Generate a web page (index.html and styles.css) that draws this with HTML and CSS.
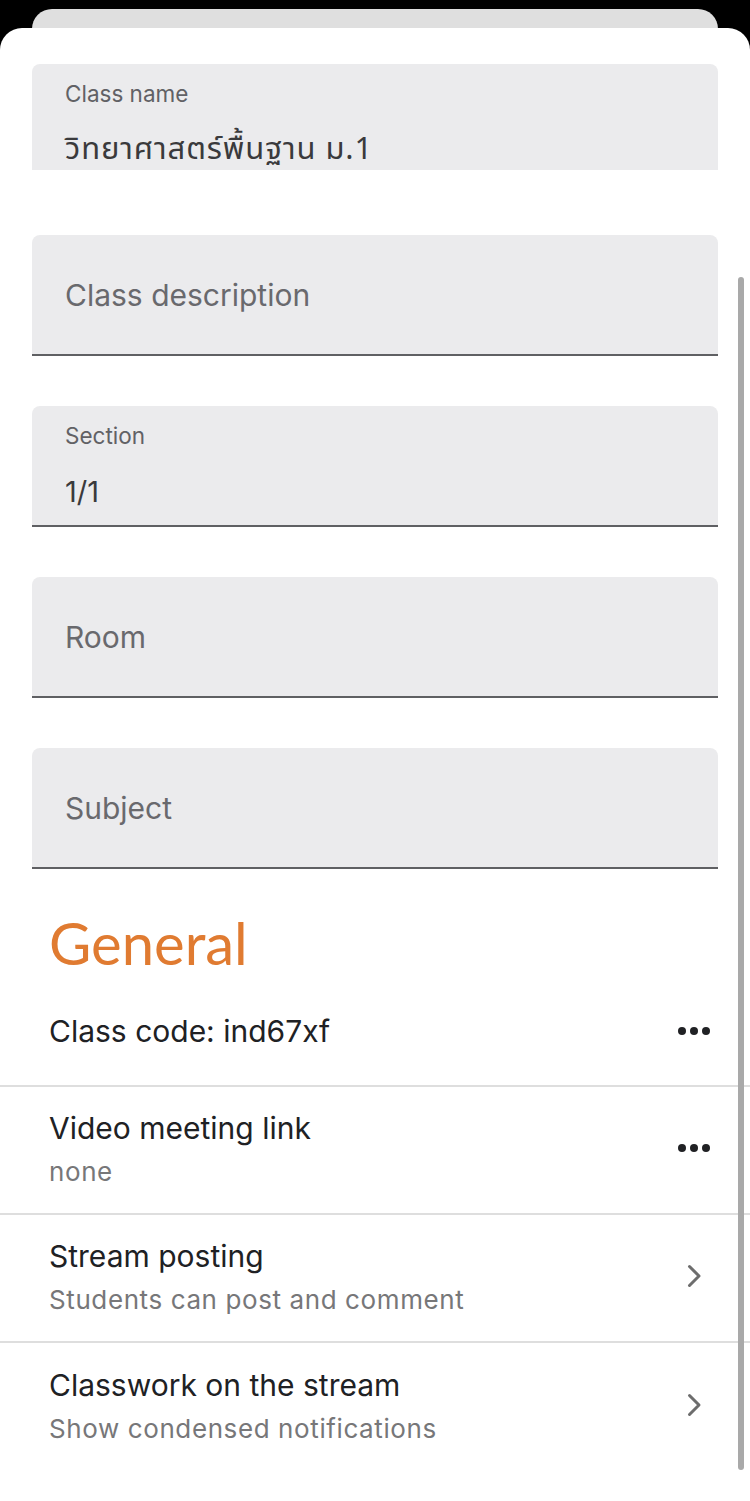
FILE: index.html
```html
<!DOCTYPE html>
<html lang="en">
<head>
<meta charset="utf-8">
<title>Class settings</title>
<link rel="stylesheet" href="styles.css">
</head>
<body>
<div class="screen">
  <div class="back-card"></div>
  <div class="sheet">
    <div class="fields">
      <div class="field field-name">
        <div class="field-label">Class name</div>
        <div class="field-value thai">วิทยาศาสตร์พื้นฐาน ม.1</div>
      </div>
      <div class="field field-empty">
        <div class="field-placeholder">Class description</div>
      </div>
      <div class="field">
        <div class="field-label">Section</div>
        <div class="field-value">1/1</div>
      </div>
      <div class="field field-empty">
        <div class="field-placeholder">Room</div>
      </div>
      <div class="field field-empty">
        <div class="field-placeholder">Subject</div>
      </div>
    </div>

    <h2 class="section-title">General</h2>

    <div class="row row-single">
      <div class="row-text">
        <div class="row-title">Class code: ind67xf</div>
      </div>
      <span class="dots"><i></i><i></i><i></i></span>
    </div>
    <div class="row">
      <div class="row-text">
        <div class="row-title">Video meeting link</div>
        <div class="row-sub">none</div>
      </div>
      <span class="dots"><i></i><i></i><i></i></span>
    </div>
    <div class="row">
      <div class="row-text">
        <div class="row-title">Stream posting</div>
        <div class="row-sub">Students can post and comment</div>
      </div>
      <svg class="chev" width="16" height="24" viewBox="0 0 16 24"><path d="M2.5 2.5 L12 12 L2.5 21.5" fill="none" stroke="#6d6d6d" stroke-width="3" stroke-linecap="round" stroke-linejoin="round"/></svg>
    </div>
    <div class="row row-last">
      <div class="row-text">
        <div class="row-title">Classwork on the stream</div>
        <div class="row-sub">Show condensed notifications</div>
      </div>
      <svg class="chev" width="16" height="24" viewBox="0 0 16 24"><path d="M2.5 2.5 L12 12 L2.5 21.5" fill="none" stroke="#6d6d6d" stroke-width="3" stroke-linecap="round" stroke-linejoin="round"/></svg>
    </div>
    <div class="scrollbar"></div>
  </div>
</div>
</body>
</html>
```

FILE: styles.css
```css
html, body {
  margin: 0;
  padding: 0;
  background: #000;
}
body {
  font-family: Inter, Roboto, "Noto Sans", sans-serif;
  width: 750px;
  height: 1501px;
  overflow: hidden;
}
.screen {
  padding-top: 9px;
}
.back-card {
  margin: 0 32px;
  height: 40px;
  background: #dfdfdf;
  border-radius: 20px 20px 0 0;
}
.sheet {
  position: relative;
  margin-top: -21px;
  background: #fff;
  border-radius: 22px 22px 0 0;
  height: 1473px;
  padding: 36px 0 0;
  box-sizing: border-box;
}
.fields {
  display: flex;
  flex-direction: column;
  gap: 50px;
  padding: 0 32px;
}
.field {
  height: 121px;
  box-sizing: border-box;
  background: #ebebed;
  border-radius: 8px 8px 0 0;
  border-bottom: 2px solid #5f6063;
  padding: 0 33px;
  display: flex;
  flex-direction: column;
}
.field-name {
  height: 106px;
  border-bottom: none;
  margin-bottom: 15px;
  overflow: hidden;
}
.field-empty {
  justify-content: center;
}
.field-label {
  font-size: 22.5px;
  line-height: 28px;
  color: #616165;
  margin-top: 16px;
}
.field-value {
  font-size: 29px;
  line-height: 40px;
  color: #3a3a3c;
  margin-top: 22px;
}
.field-value.thai {
  font-family: "Noto Sans Thai", "Noto Sans", Roboto, sans-serif;
  font-size: 31px;
  letter-spacing: 0.9px;
  line-height: 38px;
  margin-top: 23px;
}
.field-placeholder {
  font-size: 30px;
  line-height: 40px;
  color: #69696d;
}
.section-title {
  margin: 42px 0 0 49px;
  font-family: Lato, "Open Sans", sans-serif;
  font-weight: 400;
  font-size: 58px;
  line-height: 64px;
  color: #e07b31;
}
.row {
  display: flex;
  align-items: center;
  justify-content: space-between;
  padding: 23px 40px 27px 49px;
  border-bottom: 2px solid #dedede;
  height: 128px;
  box-sizing: border-box;
}
.row-single {
  height: 112px;
  padding-top: 38px;
  padding-bottom: 36px;
}
.row-last {
  border-bottom: none;
}
.row-title {
  font-size: 30px;
  line-height: 38px;
  color: #202124;
}
.row-sub {
  font-size: 26px;
  line-height: 30px;
  color: #777779;
  letter-spacing: 0.6px;
  margin-top: 10px;
}
.dots {
  display: flex;
  gap: 4px;
}
.dots i {
  display: block;
  width: 8px;
  height: 8px;
  border-radius: 50%;
  background: #202124;
}
.chev {
  margin-right: 7px;
  display: block;
}
.scrollbar {
  position: absolute;
  right: 6px;
  top: 249px;
  width: 6px;
  height: 1193px;
  border-radius: 3px;
  background: #a9a9a9;
}
```
